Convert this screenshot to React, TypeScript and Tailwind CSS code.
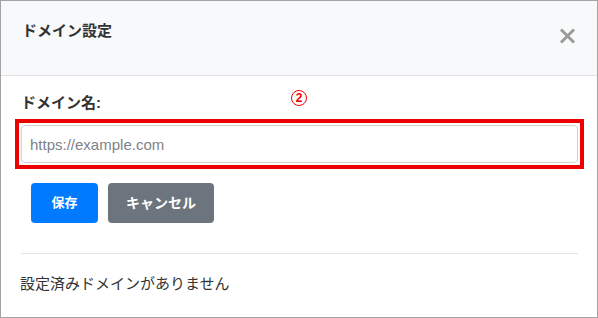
function CloseIcon() {
  return (
    <svg width="17" height="16" viewBox="0 0 17 16" className="text-[#9a9a9a]">
      <path d="M2 1.5 L15 14.5 M15 1.5 L2 14.5" stroke="currentColor" strokeWidth="3" />
    </svg>
  );
}

export default function App() {
  return (
    <div className="w-[598px] h-[318px] border border-[#a3a3a3] bg-white flex flex-col font-['Liberation_Sans','Noto_Sans_CJK_JP',sans-serif] text-[#333]">
      <div className="h-[75px] shrink-0 bg-[#f8f9fa] border-b border-[#dee2e6] flex justify-between pl-[21px] pr-[21px] pt-[19px]">
        <h5 className="text-[15px] leading-[22px] font-bold">ドメイン設定</h5>
        <button className="mt-[8px] h-[16px]">
          <CloseIcon />
        </button>
      </div>

      <div className="flex flex-col pl-[20px] pr-[19px] pt-[16px]">
        <div className="relative">
          <label className="block text-[15px] leading-[22px] font-bold">ドメイン名:</label>
          <span className="absolute left-[270px] top-[-2px] w-[16px] h-[16px] rounded-full border border-[#ee0000] text-[#ee0000] text-[12px] leading-[14px] font-bold text-center">
            2
          </span>
        </div>

        <div className="mt-[5px] -mx-[6px] border-[4px] border-[#ee0000] p-[2px]">
          <input
            type="text"
            placeholder="https://example.com"
            className="w-full h-[38px] border border-[#ced4da] rounded-[4px] px-[8px] text-[15px] placeholder:text-[#7d8288] outline-none"
          />
        </div>

        <div className="flex gap-[10px] ml-[10px] mt-[14px]">
          <button className="w-[67px] h-[40px] rounded-[4px] bg-[#007bff] text-white text-[13px] font-bold">
            保存
          </button>
          <button className="w-[106px] h-[40px] rounded-[4px] bg-[#6c757d] text-white text-[14px] font-semibold">
            キャンセル
          </button>
        </div>

        <hr className="mt-[30px] border-t border-[#e3e3e3]" />

        <p className="mt-[19px] -ml-[1px] text-[15px] leading-[22px]">設定済みドメインがありません</p>
      </div>
    </div>
  );
}
